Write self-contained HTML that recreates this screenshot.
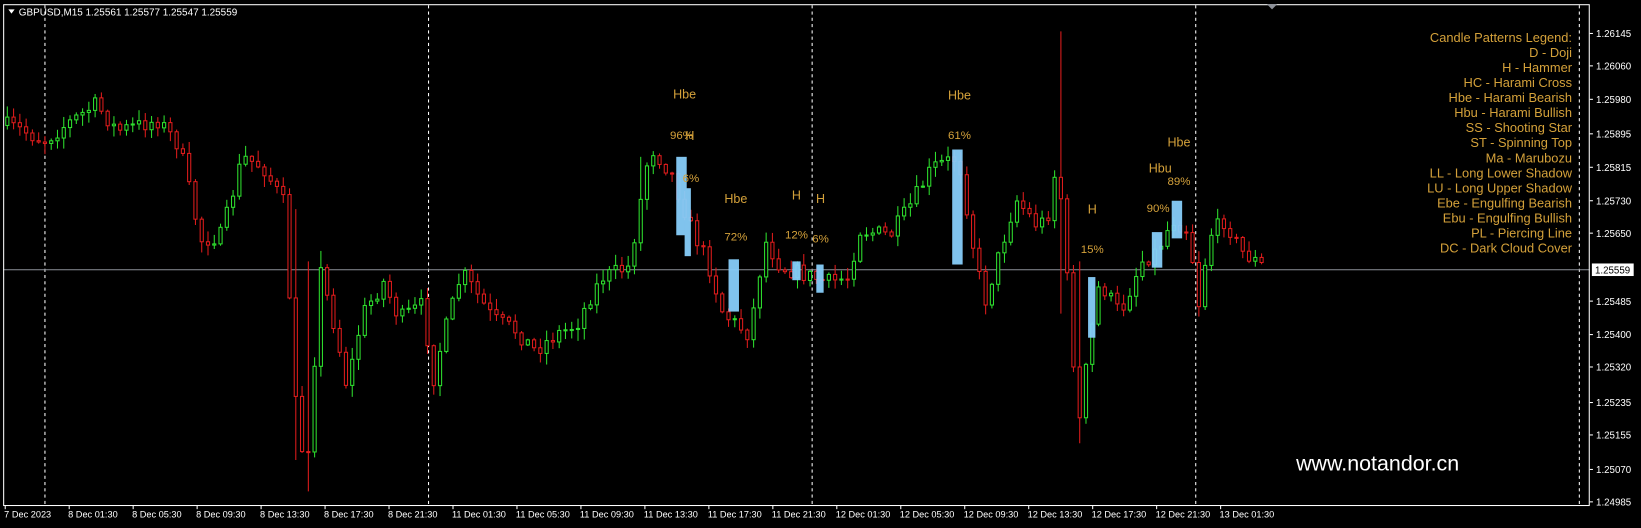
<!DOCTYPE html>
<html><head><meta charset="utf-8"><style>
html,body{margin:0;padding:0;background:#000;width:1641px;height:528px;overflow:hidden}
svg{display:block}
text{font-family:"Liberation Sans",sans-serif}
</style></head><body>
<svg id="s" width="1641" height="528" viewBox="0 0 1570 505" preserveAspectRatio="none" xmlns="http://www.w3.org/2000/svg">
<rect x="0" y="0" width="1570" height="505" fill="#000"/>
<g id="grid"></g>
<line x1="3" y1="258" x2="1521" y2="258" stroke="#8c9098" stroke-width="1"/>
<g id="candles"></g>
<g fill="#87cefa" opacity="0.95">
<rect x="647" y="150" width="10" height="75"/>
<rect x="655" y="180" width="6" height="65"/>
<rect x="697" y="248" width="10" height="50"/>
<rect x="758" y="250" width="8" height="18"/>
<rect x="781" y="253" width="7" height="27"/>
<rect x="911" y="143" width="10" height="110"/>
<rect x="1041" y="265" width="7" height="58"/>
<rect x="1102" y="222" width="10" height="34"/>
<rect x="1121" y="192" width="10" height="36"/>
</g>
<g fill="#d4a13a" font-size="12" text-anchor="middle">
<text x="655" y="94">Hbe</text><text x="652" y="133" font-size="11">96%</text><text x="660" y="134">H</text>
<text x="661" y="174" font-size="11">6%</text>
<text x="704" y="194">Hbe</text><text x="704" y="230" font-size="11">72%</text>
<text x="762" y="191">H</text><text x="762" y="228" font-size="11">12%</text>
<text x="785" y="194">H</text><text x="785" y="232" font-size="11">6%</text>
<text x="918" y="95">Hbe</text><text x="918" y="133" font-size="11">61%</text>
<text x="1045" y="204">H</text><text x="1045" y="242" font-size="11">15%</text>
<text x="1110" y="165">Hbu</text><text x="1108" y="203" font-size="11">90%</text>
<text x="1128" y="140">Hbe</text><text x="1128" y="177" font-size="11">89%</text>
</g>
<g fill="#d4a13a" font-size="12.3" text-anchor="end">
<text x="1504" y="40">Candle Patterns Legend:</text>
<text x="1504" y="54.4">D - Doji</text>
<text x="1504" y="68.8">H - Hammer </text>
<text x="1504" y="83.2">HC - Harami Cross</text>
<text x="1504" y="97.6">Hbe - Harami Bearish</text>
<text x="1504" y="112">Hbu - Harami Bullish</text>
<text x="1504" y="126.4">SS - Shooting Star</text>
<text x="1504" y="140.8">ST - Spinning Top</text>
<text x="1504" y="155.2">Ma - Marubozu</text>
<text x="1504" y="169.6">LL - Long Lower Shadow</text>
<text x="1504" y="184">LU - Long Upper Shadow</text>
<text x="1504" y="198.4">Ebe - Engulfing Bearish</text>
<text x="1504" y="212.8">Ebu - Engulfing Bullish</text>
<text x="1504" y="227.2">PL - Piercing Line</text>
<text x="1504" y="241.6">DC - Dark Cloud Cover</text>
</g>
<text x="1240" y="450" fill="#fff" font-size="20.5">www.notandor.cn</text>
<rect x="3.5" y="4.5" width="1517" height="479" fill="none" stroke="#fff" stroke-width="1"/>
<polygon points="8,9 14,9 11,13" fill="#fff"/>
<text x="18" y="15" fill="#fff" font-size="9.5">GBPUSD,M15  1.25561 1.25577 1.25547 1.25559</text>
<polygon points="1212,4 1222,4 1217,9" fill="#8c9098"/>
<g id="axis" fill="#fff" font-size="9.3"></g>
<rect x="1523" y="252" width="40" height="12" fill="#fff"/>
<text x="1526" y="261.5" fill="#000" font-size="9.3">1.25559</text>
</svg>
<script>
(function(){
var NS="http://www.w3.org/2000/svg";
function el(p,t,a){var e=document.createElementNS(NS,t);for(var k in a)e.setAttribute(k,a[k]);p.appendChild(e);return e;}
var grid=document.getElementById('grid');
[43,410,777,1144,1511].forEach(function(x){el(grid,'line',{x1:x,y1:5,x2:x,y2:483,stroke:'#fff','stroke-dasharray':'3,3','stroke-width':1});});
var ax=document.getElementById('axis');
var pr=[["1.26145",32],["1.26060",63],["1.25980",95],["1.25895",128],["1.25815",160],["1.25730",192],["1.25650",223],["1.25485",288],["1.25400",320],["1.25320",351],["1.25235",385],["1.25155",416],["1.25070",449],["1.24985",480]];
pr.forEach(function(p){el(ax,'line',{x1:1521,y1:p[1],x2:1524,y2:p[1],stroke:'#fff'});var t=el(ax,'text',{x:1527,y:p[1]+3.5});t.textContent=p[0];});
var dl=["7 Dec 2023","8 Dec 01:30","8 Dec 05:30","8 Dec 09:30","8 Dec 13:30","8 Dec 17:30","8 Dec 21:30","11 Dec 01:30","11 Dec 05:30","11 Dec 09:30","11 Dec 13:30","11 Dec 17:30","11 Dec 21:30","12 Dec 01:30","12 Dec 05:30","12 Dec 09:30","12 Dec 13:30","12 Dec 17:30","12 Dec 21:30","13 Dec 01:30"];
dl.forEach(function(d,i){var x=5+i*61.2;el(ax,'line',{x1:x,y1:483,x2:x,y2:487,stroke:'#fff'});var t=el(ax,'text',{x:x-1,y:495,'font-size':8.8});t.textContent=d;});
var pts=[[5,120],[20,125],[40,135],[60,120],[90,100],[110,125],[150,115],[170,140],[190,230],[210,225],[230,150],[250,160],[270,195],[283,420],[292,440],[305,260],[320,320],[330,370],[345,300],[365,270],[380,305],[405,290],[410,375],[420,330],[440,260],[470,305],[490,315],[510,335],[530,320],[550,310],[565,280],[575,265],[600,255],[620,140],[640,165],[660,220],[675,250],[690,300],[715,320],[730,230],[745,255],[760,260],[790,270],[810,265],[820,220],[850,225],[870,195],[890,160],[915,150],[930,240],[940,290],[955,240],[970,190],[990,215],[1000,210],[1010,150],[1020,280],[1030,410],[1040,330],[1050,270],[1070,300],[1090,250],[1105,240],[1120,210],[1135,220],[1145,290],[1155,225],[1170,210],[1185,240],[1200,250],[1210,258]];
function interp(x){for(var i=1;i<pts.length;i++){if(x<=pts[i][0]){var a=pts[i-1],b=pts[i];return a[1]+(b[1]-a[1])*(x-a[0])/(b[0]-a[0]);}}return 258;}
var seed=7;function rnd(){seed=(seed*16807)%2147483647;return seed/2147483647;}
var cg=document.getElementById('candles');
var prev=interp(5);
var spikes=[[283,200,440],[292,250,470],[1015,30,300],[1030,250,424],[305,240,300],[610,150,240]];
for(var x=5;x<=1210;x+=6){
 var c=interp(x)+(rnd()-0.5)*16;
 var o=prev;
 var hi=Math.min(o,c)-rnd()*10-1, lo=Math.max(o,c)+rnd()*10+1;
 spikes.forEach(function(s){if(Math.abs(x-s[0])<3){hi=Math.min(hi,s[1]);lo=Math.max(lo,s[2]);}});
 var col=c<o?'#2ee02e':'#e01c1c';
 el(cg,'line',{x1:x+2,y1:hi,x2:x+2,y2:lo,stroke:col,'stroke-width':1});
 var bt=Math.min(o,c),h=Math.max(Math.abs(o-c),1);
 el(cg,'rect',{x:x+0.5,y:bt,width:3,height:h,fill:'#000',stroke:col,'stroke-width':1});
 prev=c;
}
})();
</script>
</body></html>
